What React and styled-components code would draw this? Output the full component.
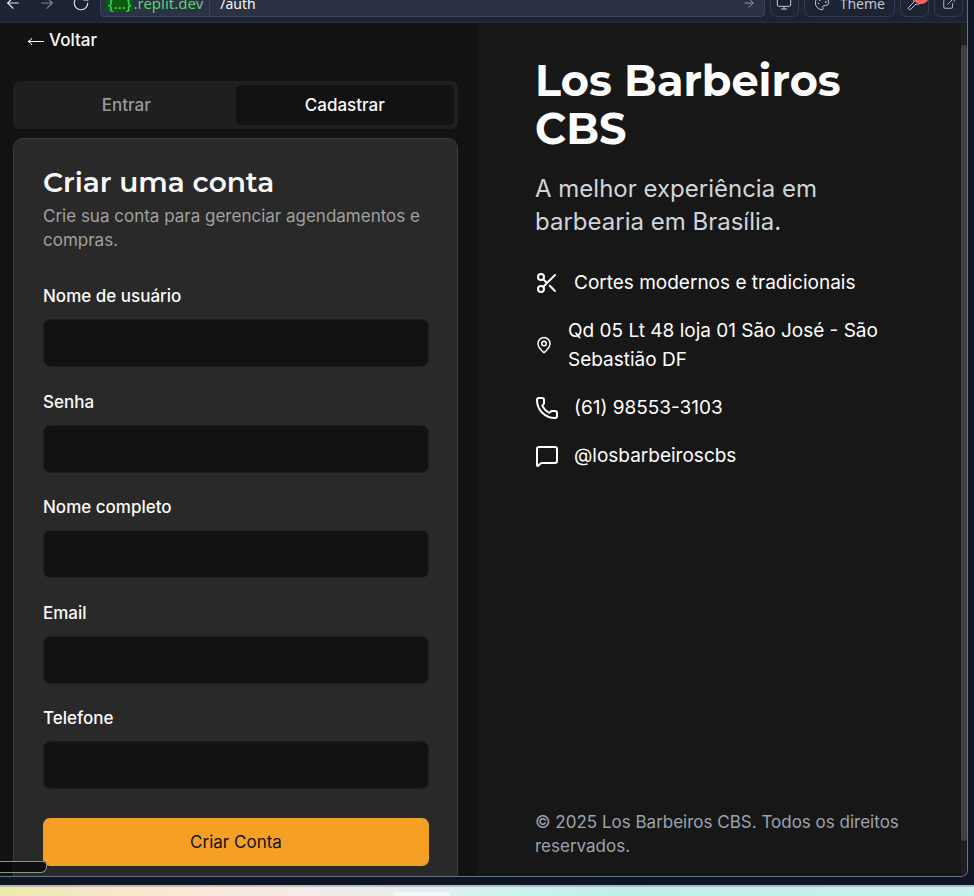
import React from "react";
import styled, { createGlobalStyle } from "styled-components";
import {
  ArrowLeft,
  ArrowRight,
  RotateCw,
  Monitor,
  Palette,
  Wrench,
  ExternalLink,
  Scissors,
  MapPin,
  Phone,
  MessageSquare,
} from "lucide-react";

const GlobalStyle = createGlobalStyle`
  * { box-sizing: border-box; }
  body { margin: 0; background: #0e1525; }
  button, input { font: inherit; }
  h1, h2, p, ul { margin: 0; padding: 0; }
`;

const Desktop = styled.div`
  height: 100vh;
  display: flex;
  flex-direction: column;
  overflow: hidden;
  font-family: Inter, "Liberation Sans", sans-serif;
  color: #fafafa;
`;

const BrowserFrame = styled.div`
  position: relative;
  flex: 1;
  min-height: 0;
  margin: 0 6px 8px 0;
  display: flex;
  flex-direction: column;
  border: solid #6b7080;
  border-width: 0 1px 1px 0;
  border-bottom-right-radius: 7px;
  overflow: hidden;
`;

const Toolbar = styled.header`
  flex: none;
  height: 23px;
  padding: 0 4px 5px 0;
  display: flex;
  align-items: flex-end;
  gap: 5px;
  background: #1c2333;
  border-bottom: 1px solid #262d40;
  overflow: hidden;
  font-family: "Noto Sans", sans-serif;
  font-size: 14px;
  color: #c2c8cc;
`;

const NavButtons = styled.nav`
  display: flex;
  gap: 8px;
  width: 95px;
`;

const NavButton = styled.button`
  width: 26px;
  height: 28px;
  padding: 0;
  display: flex;
  align-items: center;
  justify-content: center;
  border: 0;
  background: none;
  color: ${(p) => (p.$dim ? "#7d8494" : "#e4e7ec")};
`;

const AddressBar = styled.div`
  flex: 1;
  height: 28px;
  display: flex;
  align-items: center;
  padding-right: 8px;
  background: #2b3245;
  border: 1px solid #3c445c;
  border-radius: 4px;
  color: #9da2a6;
`;

const Domain = styled.div`
  align-self: stretch;
  display: flex;
  align-items: center;
  padding: 0 6px 0 5px;
  border-right: 1px solid #3c445c;
  font-size: 15px;
  color: #5fd070;
`;

const DomainChip = styled.span`
  padding: 0 2px;
  line-height: 18px;
  border-radius: 4px;
  background: #0a5c12;
`;

const PathInput = styled.input`
  flex: 1;
  min-width: 0;
  padding: 0 10px;
  border: 0;
  outline: 0;
  background: none;
  color: #f5f9fc;
`;

const ToolButton = styled.button`
  position: relative;
  height: 28px;
  min-width: 29px;
  padding: 0 ${(p) => (p.$wide ? 9 : 0)}px;
  display: flex;
  align-items: center;
  justify-content: center;
  gap: 10px;
  border: 1px solid #343c52;
  border-radius: 7px;
  background: #1c2333;
  color: #c2c8cc;
`;

const AlertDot = styled.span`
  position: absolute;
  right: -1px;
  top: -2px;
  width: 16px;
  height: 16px;
  border-radius: 50%;
  background: #ff6166;
`;

const Viewport = styled.div`
  flex: 1;
  min-height: 0;
  display: flex;
`;

const AuthLayout = styled.main`
  flex: 1;
  display: grid;
  grid-template-columns: 477fr 484fr;
  grid-template-rows: minmax(0, 1fr);
  min-width: 0;
  overflow: hidden;
`;

const ScrollTrack = styled.div`
  flex: none;
  width: 6px;
  padding: 22px 0 35px;
  display: flex;
  background: #1f1f1f;
`;

const ScrollThumb = styled.div`
  flex: 1;
  border-radius: 3px;
  background: #414141;
`;

const FormColumn = styled.section`
  padding: 5px 19px 0 13px;
  background: #121212;
`;

const BackLink = styled.a`
  display: flex;
  align-items: center;
  gap: 4px;
  padding-left: 14px;
  font-size: 17px;
  line-height: 24px;
  font-weight: 500;
  color: #fafafa;
  text-decoration: none;
`;

const BackArrow = styled.svg`
  width: 18px;
  height: 10px;
  margin-top: 4px;
`;

const TabList = styled.div`
  display: grid;
  grid-template-columns: 1fr 1fr;
  margin-top: 29px;
  padding: 4px;
  border-radius: 7px;
  background: #1f1f1f;
`;

const Tab = styled.button`
  height: 40px;
  border: 0;
  border-radius: 5px;
  background: ${(p) => (p.$active ? "#121212" : "transparent")};
  color: ${(p) => (p.$active ? "#fafafa" : "#999999")};
  font-size: 17px;
  font-weight: 500;
`;

const Card = styled.div`
  margin-top: 9px;
  padding: 29px 28px 29px 29px;
  border: 1px solid #3d3d3d;
  border-radius: 10px;
  background: #292929;
`;

const CardTitle = styled.h2`
  font-family: Montserrat, Inter, sans-serif;
  font-size: 28px;
  line-height: 28px;
  font-weight: 600;
  white-space: nowrap;
`;

const CardText = styled.p`
  margin-top: 8px;
  font-size: 17px;
  line-height: 24px;
  color: #a0a0a0;
`;

const Fields = styled.div`
  display: flex;
  flex-direction: column;
  justify-content: space-between;
  min-height: 505px;
  margin: 32px 0 29px;
`;

const Field = styled.label`
  display: flex;
  flex-direction: column;
  gap: 11px;
  font-size: 17px;
  line-height: 24px;
  font-weight: 500;
`;

const TextInput = styled.input`
  width: 100%;
  height: 48px;
  padding: 0 14px;
  border: 1px solid #1f1f1f;
  border-radius: 7px;
  background: #121212;
  color: #fafafa;
`;

const SubmitButton = styled.button`
  width: 100%;
  height: 48px;
  border: 0;
  border-radius: 7px;
  background: #f59f24;
  color: #121212;
  font-size: 17px;
  font-weight: 400;
`;

const InfoColumn = styled.aside`
  display: flex;
  flex-direction: column;
  padding: 34px 58px 18px;
  background: #171717;
`;

const BrandTitle = styled.h1`
  font-family: Montserrat, Inter, sans-serif;
  font-size: 43px;
  line-height: 48px;
  font-weight: 700;
  color: #ffffff;
`;

const Tagline = styled.p`
  margin-top: 19px;
  font-size: 24px;
  line-height: 33px;
  color: #d1d5db;
`;

const ContactList = styled.ul`
  display: flex;
  flex-direction: column;
  gap: 19px;
  margin-top: 30px;
  list-style: none;
  font-size: 19px;
  line-height: 29px;
  color: #ffffff;
`;

const ContactItem = styled.li`
  display: flex;
  align-items: center;
  gap: 15px;

  svg { flex: none; }
`;

const Copyright = styled.p`
  margin-top: auto;
  font-size: 17px;
  line-height: 24px;
  color: #9ca3af;
`;

const StatusBubble = styled.div`
  position: absolute;
  left: 0;
  bottom: 3px;
  width: 47px;
  height: 12px;
  border: solid #8f8f8f;
  border-width: 1px 1px 1px 0;
  border-radius: 0 3px 6px 0;
  background: rgba(8, 8, 8, 0.75);
`;

const Wallpaper = styled.footer`
  flex: none;
  height: 11px;
  padding: 5px 0 0 393px;
  border-top: 2px solid rgba(110, 100, 115, 0.35);
  background: linear-gradient(
    90deg,
    #e9eda9 0%,
    #f4e8c4 8%,
    #fbe9d8 20%,
    #f3ece8 32%,
    #e5efec 43%,
    #cdf5ed 52%,
    #bfeeea 64%,
    #c9f2ef 100%
  );
`;

const DockPill = styled.div`
  width: 58px;
  height: 4px;
  border-radius: 4px 4px 0 0;
  background: #f3f7f7;
`;

const fields = [
  { id: "username", label: "Nome de usuário", type: "text" },
  { id: "password", label: "Senha", type: "password" },
  { id: "fullName", label: "Nome completo", type: "text" },
  { id: "email", label: "Email", type: "email" },
  { id: "phone", label: "Telefone", type: "tel" },
];

const contacts = [
  { icon: Scissors, size: 24, text: "Cortes modernos e tradicionais" },
  { icon: MapPin, size: 18, text: "Qd 05 Lt 48 loja 01 São José - São Sebastião DF" },
  { icon: Phone, size: 24, text: "(61) 98553-3103" },
  { icon: MessageSquare, size: 24, text: "@losbarbeiroscbs" },
];

function BrowserToolbar() {
  return (
    <Toolbar>
      <NavButtons>
        <NavButton aria-label="Back"><ArrowLeft size={18} strokeWidth={1.5} /></NavButton>
        <NavButton aria-label="Forward" $dim><ArrowRight size={18} strokeWidth={1.5} /></NavButton>
        <NavButton aria-label="Reload"><RotateCw size={18} strokeWidth={1.5} /></NavButton>
      </NavButtons>
      <AddressBar>
        <Domain><DomainChip>{"{...}"}</DomainChip>.replit.dev</Domain>
        <PathInput aria-label="Path" defaultValue="/auth" />
        <ArrowRight size={14} strokeWidth={1.5} />
      </AddressBar>
      <ToolButton aria-label="Devices"><Monitor size={16} strokeWidth={1.5} /></ToolButton>
      <ToolButton $wide><Palette size={16} strokeWidth={1.5} />Theme</ToolButton>
      <ToolButton aria-label="Tools">
        <Wrench size={16} strokeWidth={1.5} />
        <AlertDot />
      </ToolButton>
      <ToolButton aria-label="Open in new tab"><ExternalLink size={14} strokeWidth={1.5} /></ToolButton>
    </Toolbar>
  );
}

export default function App() {
  return (
    <Desktop>
      <GlobalStyle />
      <BrowserFrame>
        <BrowserToolbar />
        <Viewport>
          <AuthLayout>
            <FormColumn>
              <BackLink href="#voltar">
                <BackArrow viewBox="0 0 18 10" fill="none" stroke="currentColor" aria-hidden="true">
                  <path d="M1 4.5h16M5 1Q4 3.5 1 4.5Q4 5.5 5 8" />
                </BackArrow>
                Voltar
              </BackLink>
              <TabList role="tablist">
                <Tab role="tab" aria-selected="false">Entrar</Tab>
                <Tab role="tab" aria-selected="true" $active>Cadastrar</Tab>
              </TabList>
              <Card>
                <CardTitle>Criar uma conta</CardTitle>
                <CardText>Crie sua conta para gerenciar agendamentos e compras.</CardText>
                <form onSubmit={(e) => e.preventDefault()}>
                  <Fields>
                    {fields.map((f) => (
                      <Field key={f.id} htmlFor={f.id}>
                        {f.label}
                        <TextInput id={f.id} name={f.id} type={f.type} />
                      </Field>
                    ))}
                  </Fields>
                  <SubmitButton type="submit">Criar Conta</SubmitButton>
                </form>
              </Card>
            </FormColumn>
            <InfoColumn>
              <BrandTitle>Los Barbeiros CBS</BrandTitle>
              <Tagline>A melhor experiência em barbearia em Brasília.</Tagline>
              <ContactList>
                {contacts.map(({ icon: Icon, size, text }) => (
                  <ContactItem key={text}>
                    <Icon size={size} />
                    <span>{text}</span>
                  </ContactItem>
                ))}
              </ContactList>
              <Copyright>© 2025 Los Barbeiros CBS. Todos os direitos reservados.</Copyright>
            </InfoColumn>
          </AuthLayout>
          <ScrollTrack><ScrollThumb /></ScrollTrack>
        </Viewport>
        <StatusBubble />
      </BrowserFrame>
      <Wallpaper><DockPill /></Wallpaper>
    </Desktop>
  );
}
